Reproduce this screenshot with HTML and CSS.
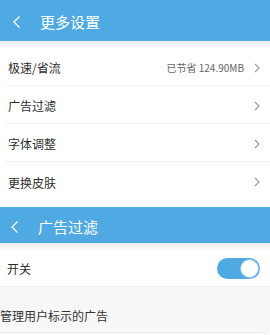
FILE: index.html
```html
<!DOCTYPE html>
<html lang="zh-CN">
<head>
    <meta charset="UTF-8">
    <meta name="viewport" content="width=device-width, initial-scale=1.0">
    <title>更多设置</title>
    <link rel="stylesheet" href="styles.css">
</head>
<body>

    <!-- 更多设置 -->
    <div class="bar">
        <svg class="back" width="8" height="12" viewBox="0 0 8 12"><polyline points="6.5,0.5 1,6 6.5,11.5" fill="none" stroke="#fff" stroke-width="1.3"/></svg>
        <span class="bar-title">更多设置</span>
    </div>
    <div class="shade"></div>

    <div class="list">
        <div class="row">
            <span class="label">极速/省流</span>
            <span class="extra">已节省 124.90MB</span>
            <svg class="arrow" width="6" height="10" viewBox="0 0 6 10"><polyline points="1,1 5,5 1,9" fill="none" stroke="#999" stroke-width="1.1"/></svg>
        </div>
        <div class="row">
            <span class="label">广告过滤</span>
            <svg class="arrow" width="6" height="10" viewBox="0 0 6 10"><polyline points="1,1 5,5 1,9" fill="none" stroke="#999" stroke-width="1.1"/></svg>
        </div>
        <div class="row">
            <span class="label">字体调整</span>
            <svg class="arrow" width="6" height="10" viewBox="0 0 6 10"><polyline points="1,1 5,5 1,9" fill="none" stroke="#999" stroke-width="1.1"/></svg>
        </div>
        <div class="row last">
            <span class="label">更换皮肤</span>
            <svg class="arrow" width="6" height="10" viewBox="0 0 6 10"><polyline points="1,1 5,5 1,9" fill="none" stroke="#999" stroke-width="1.1"/></svg>
        </div>
    </div>

    <!-- 广告过滤 -->
    <div class="bar bar-small">
        <svg class="back" width="8" height="12" viewBox="0 0 8 12"><polyline points="6.5,0.5 1,6 6.5,11.5" fill="none" stroke="#fff" stroke-width="1.3"/></svg>
        <span class="bar-title">广告过滤</span>
    </div>
    <div class="shade"></div>

    <div class="switch-row">
        <span class="label">开关</span>
        <div class="toggle"><div class="knob"></div></div>
    </div>

    <div class="grey">
        <p class="section-title">管理用户标示的广告</p>
        <div class="card"></div>
    </div>

</body>
</html>
```

FILE: styles.css
```css
html, body {
    overflow: hidden;
}

body {
    margin: 0;
    width: 270px;
    height: 335px;
    background: #fff;
    font-family: "Noto Sans CJK SC", "Noto Sans", sans-serif;
    color: #333;
}

/* Thanh tiêu đề xanh */
.bar {
    height: 41px;
    background: #4faae3;
    display: flex;
    align-items: center;
    padding-left: 13px;
}

.bar-small {
    height: 36px;
    padding-left: 11px;
}

.back {
    display: block;
    margin-top: 3px;
}

.bar-title {
    color: #fff;
    font-size: 15px;
    margin-left: 19px;
    margin-top: 2px;
}

.shade {
    height: 7px;
    background: linear-gradient(#ececec, #fbfbfb);
}

/* Danh sách cài đặt */
.list {
    padding-bottom: 7px;
}

.row {
    height: 37px;
    margin-left: 6px;
    padding: 2px 10px 0 2px;
    box-sizing: border-box;
    height: 38px;
    border-bottom: 1px solid #efefef;
    display: flex;
    align-items: center;
}

.row.last {
    border-bottom: none;
}

.label {
    font-size: 12px;
    flex: 1;
    color: #2e2e2e;
}

.extra {
    font-size: 10px;
    color: #666;
    margin-right: 10px;
}

.arrow {
    display: block;
}

/* Công tắc */
.switch-row {
    height: 36px;
    padding: 0 10px 0 7px;
    border-bottom: 1px solid #efefef;
    display: flex;
    align-items: center;
}

.toggle {
    width: 43px;
    height: 21px;
    border-radius: 11px;
    background: #4faae3;
    position: relative;
}

.knob {
    position: absolute;
    right: 1px;
    top: 1px;
    width: 17px;
    height: 17px;
    border-radius: 50%;
    background: #fff;
    border: 1px solid #8cc8ee;
}

.grey {
    background: #f7f7f7;
    padding-top: 21px;
}

.section-title {
    margin: 0;
    font-size: 12px;
    line-height: 16px;
}

.card {
    margin-top: 8px;
    margin-right: 4px;
    height: 2px;
    background: #fff;
    border-top: 1px solid #eaeaea;
    border-right: 1px solid #eaeaea;
    border-radius: 0 5px 0 0;
}
```
